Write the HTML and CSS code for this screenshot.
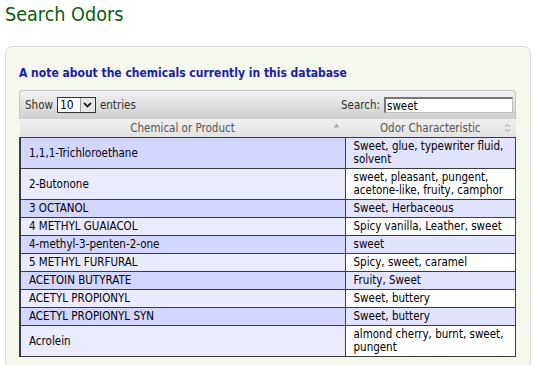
FILE: index.html
```html
<!DOCTYPE html>
<html lang="en">
<head>
  <meta charset="UTF-8" />
  <meta name="viewport" content="width=device-width, initial-scale=1.0" />
  <title>Search Odors</title>
  <link rel="stylesheet" href="styles.css">
</head>
<body>
  <h1 class="page-title">Search Odors</h1>
  <div class="panel">
    <h3 class="note">A note about the chemicals currently in this database</h3>
    <div class="dt-wrapper">
      <div class="dt-toolbar">
        <div class="dt-length">
          Show
          <span class="fake-select">
            <span class="fake-select-value">10</span>
            <span class="fake-select-btn">
              <svg width="9" height="6" viewBox="0 0 9 6"><path d="M1 1 L4.5 4.5 L8 1" fill="none" stroke="#222" stroke-width="1.8"/></svg>
            </span>
          </span>
          entries
        </div>
        <div class="dt-filter">
          Search: <input type="text" value="sweet">
        </div>
      </div>
      <table class="dt-table">
        <thead>
          <tr>
            <th class="col-chem">Chemical or Product
              <svg class="sort-icon" width="7" height="5" viewBox="0 0 7 5"><path d="M0.5 4.5 L3.5 0.5 L6.5 4.5 Z" fill="#aaa"/></svg>
            </th>
            <th class="col-odor">Odor Characteristic
              <svg class="sort-icon" width="7" height="10" viewBox="0 0 7 10"><path d="M1 4 L3.5 1.5 L6 4 M1 6 L3.5 8.5 L6 6" fill="none" stroke="#999" stroke-width="1"/></svg>
            </th>
          </tr>
        </thead>
        <tbody>
          <tr class="odd"><td class="sorting">1,1,1-Trichloroethane</td><td>Sweet, glue, typewriter fluid, solvent</td></tr>
          <tr class="even"><td class="sorting">2-Butonone</td><td>sweet, pleasant, pungent, acetone-like, fruity, camphor</td></tr>
          <tr class="odd"><td class="sorting">3 OCTANOL</td><td>Sweet, Herbaceous</td></tr>
          <tr class="even"><td class="sorting">4 METHYL GUAIACOL</td><td>Spicy vanilla, Leather, sweet</td></tr>
          <tr class="odd"><td class="sorting">4-methyl-3-penten-2-one</td><td>sweet</td></tr>
          <tr class="even"><td class="sorting">5 METHYL FURFURAL</td><td>Spicy, sweet, caramel</td></tr>
          <tr class="odd"><td class="sorting">ACETOIN BUTYRATE</td><td>Fruity, Sweet</td></tr>
          <tr class="even"><td class="sorting">ACETYL PROPIONYL</td><td>Sweet, buttery</td></tr>
          <tr class="odd"><td class="sorting">ACETYL PROPIONYL SYN</td><td>Sweet, buttery</td></tr>
          <tr class="even"><td class="sorting">Acrolein</td><td>almond cherry, burnt, sweet, pungent</td></tr>
        </tbody>
      </table>
    </div>
  </div>
</body>
</html>
```

FILE: styles.css
```css
body {
  font-family: "DejaVu Sans Condensed", "DejaVu Sans", Verdana, sans-serif;
  margin: 0;
  padding: 0 5px;
  background: #fff;
  color: #000;
}
.page-title {
  margin: 0;
  padding-top: 3px;
  font-size: 19.6px;
  font-weight: normal;
  color: #0b5d0b;
  height: 43px;
}
.panel {
  background: #f5f8ec;
  border: 1px solid #dcdcdc;
  border-radius: 7px;
  padding: 19px 14px 10px 13px;
  width: 497px;
}
.note {
  margin: 0 0 10px 0;
  font-size: 12px;
  font-weight: bold;
  color: #1c1ca8;
}
.dt-wrapper {
  font-size: 11.5px;
}
.dt-toolbar {
  display: flex;
  justify-content: space-between;
  align-items: center;
  height: 28px;
  padding: 0 2px 0 5px;
  background: linear-gradient(to bottom, #f2f2f2, #cfcfcf);
  border: 1px solid #c4c4c4;
  border-bottom: none;
  border-radius: 4px 4px 0 0;
  color: #333;
}
.dt-length {
  display: flex;
  align-items: center;
  gap: 4px;
}
.fake-select {
  display: inline-flex;
  width: 39px;
  height: 16px;
  border: 1px solid #333;
  background: #fff;
  box-sizing: border-box;
}
.fake-select-value {
  flex: 1;
  padding-left: 2px;
  line-height: 14px;
  font-size: 12px;
  color: #000;
}
.fake-select-btn {
  width: 14px;
  display: flex;
  align-items: center;
  justify-content: center;
  background: #e8e8e8;
  border-left: 1px solid #999;
}
.dt-filter {
  display: flex;
  align-items: center;
  gap: 4px;
}
.dt-filter input {
  width: 129px;
  height: 16px;
  box-sizing: border-box;
  padding: 0 1px;
  font-family: inherit;
  font-size: 11.5px;
  border: 1px solid #bbb;
  border-top: 2px solid #777;
  border-left: 2px solid #777;
}
.dt-table {
  width: 100%;
  border-collapse: collapse;
}
.dt-table th {
  height: 18px;
  padding: 0;
  font-weight: normal;
  color: #555;
  background: linear-gradient(to bottom, #f0f0f0, #e2e2e2);
  position: relative;
}
.sort-icon {
  position: absolute;
  right: 5px;
  top: 4px;
}
.col-chem {
  width: 325px;
}
.dt-table td {
  padding: 2px 8px;
  border: 1px solid #3c3c3c;
  line-height: 13px;
}
.dt-table tbody td:first-child {
  border-left: 2px solid #3c3c3c;
}
.dt-table tbody td:last-child {
  padding-left: 8px;
  padding-right: 4px;
}
tr.odd td {
  background: #e2e4ff;
}
tr.even td {
  background: #fff;
}
tr.odd td.sorting {
  background: #d3d6ff;
}
tr.even td.sorting {
  background: #eaebff;
}
```
